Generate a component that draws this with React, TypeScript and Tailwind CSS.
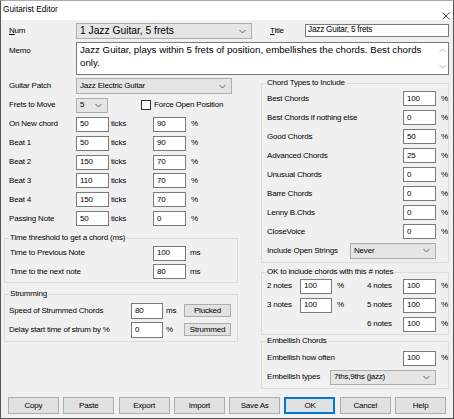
import React from 'react';

interface BoxProps {
   value?: string;
   className?: string;
}

const Chevron: React.FC<{ up?: boolean; color?: string }> = ({ up, color = '#555' }) => (
   <svg width="7" height="5" viewBox="0 0 7 5" className="shrink-0">
      <polyline
         points={up ? '0.5,4 3.5,1 6.5,4' : '0.5,1 3.5,4 6.5,1'}
         fill="none"
         stroke={color}
         strokeWidth="0.9"
      />
   </svg>
);

// поле ввода (edit box)
const Field: React.FC<BoxProps> = ({ value, className = 'w-[33px]' }) => (
   <div
      className={`h-[15px] shrink-0 bg-white border border-[#7a7a7a] flex items-center pl-[3px] text-[8px] tracking-[-0.2px] ${className}`}
   >
      {value}
   </div>
);

const Combo: React.FC<BoxProps & { big?: boolean }> = ({ value, className, big }) => (
   <div
      className={`shrink-0 bg-[#e5e5e5] border border-[#adadad] flex items-center justify-between pl-[3px] pr-[5px] ${
         big ? 'text-[10.25px]' : 'text-[8px] tracking-[-0.2px]'
      } ${className}`}
   >
      <span>{value}</span>
      <Chevron />
   </div>
);

const Label: React.FC<{ children: React.ReactNode; className?: string }> = ({ children, className }) => (
   <span className={`shrink-0 text-[8px] tracking-[-0.2px] whitespace-nowrap ${className ?? ''}`}>{children}</span>
);

const Group: React.FC<{ title: string; className?: string; children: React.ReactNode }> = ({
   title,
   className,
   children,
}) => (
   <div className={`relative border border-[#dcdcdc] ${className ?? ''}`}>
      <span className="absolute -top-[6px] left-[4px] bg-[#f0f0f0] px-[1px] leading-[10px] text-[8px] tracking-[-0.2px] whitespace-nowrap">
         {title}
      </span>
      {children}
   </div>
);

const Button: React.FC<{ children: React.ReactNode; className?: string; primary?: boolean }> = ({
   children,
   className = 'w-[51px] h-[17px]',
   primary,
}) => (
   <div
      className={`shrink-0 bg-[#e1e1e1] border flex items-center justify-center text-[8px] tracking-[-0.2px] ${
         primary ? 'border-[#0078d7] shadow-[inset_0_0_0_1px_#0078d7]' : 'border-[#adadad]'
      } ${className}`}
   >
      {children}
   </div>
);

const tickRows = [
   { label: 'On New chord', ticks: '50', pct: '90' },
   { label: 'Beat 1', ticks: '50', pct: '90' },
   { label: 'Beat 2', ticks: '150', pct: '70' },
   { label: 'Beat 3', ticks: '110', pct: '70' },
   { label: 'Beat 4', ticks: '150', pct: '70' },
   { label: 'Passing Note', ticks: '50', pct: '0' },
];

const chordTypes = [
   { label: 'Best Chords', value: '100' },
   { label: 'Best Chords if nothing else', value: '0' },
   { label: 'Good Chords', value: '50' },
   { label: 'Advanced Chords', value: '25' },
   { label: 'Unusual Chords', value: '0' },
   { label: 'Barre Chords', value: '0' },
   { label: 'Lenny B.Chds', value: '0' },
   { label: 'CloseVoice', value: '0' },
];

export default function App() {
   return (
      <div className="w-[454px] h-[419px] flex flex-col border border-[#555] border-t-[#aaa] bg-[#f0f0f0] text-black font-['Liberation_Sans',Arial,sans-serif] overflow-hidden">
         {/* заголовок окна */}
         <div className="h-[19px] shrink-0 bg-white flex items-start justify-between">
            <span className="pl-[2px] pt-[3px] leading-[10px] text-[8.3px]">Guitarist Editor</span>
            <svg width="8" height="8" viewBox="0 0 8 8" className="mt-[11px] mr-[3px]">
               <path d="M0.5 0.5 L7.5 7.5 M7.5 0.5 L0.5 7.5" stroke="#222" strokeWidth="0.8" />
            </svg>
         </div>

         <div className="flex-1 flex flex-col pl-[3px]">
            {/* Num / Title */}
            <div className="mt-[3px] h-[16px] flex items-center pl-[5px]">
               <Label className="w-[67px]">
                  <span className="underline">N</span>um
               </Label>
               <Combo value="1 Jazz Guitar, 5 frets" className="w-[176px] h-[16px]" big />
               <Label className="ml-[18px] w-[35px]">
                  <span className="underline">T</span>itle
               </Label>
               <div className="w-[144px] h-[13px] -mt-[2px] bg-white border border-[#7a7a7a] flex items-center pl-[2px] text-[8.2px] tracking-[-0.2px]">
                  Jazz Guitar, 5 frets
               </div>
            </div>

            {/* Memo */}
            <div className="mt-[3px] h-[33px] flex pl-[5px]">
               <Label className="w-[67px] pt-[3px]">Memo</Label>
               <div className="w-[373px] h-[33px] bg-white border border-[#7a7a7a] flex">
                  <div className="flex-1 pl-[3px] pt-[1px] text-[9.7px] leading-[12.5px] whitespace-nowrap overflow-hidden">
                     Jazz Guitar, plays within 5 frets of position, embellishes the chords. Best chords
                     <br />
                     only.
                  </div>
                  <div className="w-[12px] shrink-0 flex flex-col items-center justify-between py-[5px]">
                     <Chevron up color="#a6a6a6" />
                     <Chevron color="#a6a6a6" />
                  </div>
               </div>
            </div>

            <div className="flex">
               {/* левая колонка */}
               <div className="w-[234px] flex flex-col pt-[2px]">
                  <div className="h-[18.9px] flex items-center pl-[5px]">
                     <Label className="w-[67px]">Guitar Patch</Label>
                     <Combo value="Jazz Electric Guitar" className="w-[156px] h-[16px]" />
                  </div>
                  <div className="h-[18.9px] flex items-center pl-[5px]">
                     <Label className="w-[67px]">Frets to Move</Label>
                     <Combo value="5" className="w-[32px] h-[15px]" />
                     <div className="ml-[33px] w-[10px] h-[10px] bg-white border border-[#333]" />
                     <Label className="ml-[3px]">Force Open Position</Label>
                  </div>
                  {tickRows.map((r) => (
                     <div key={r.label} className="h-[18.9px] flex items-center pl-[5px]">
                        <Label className="w-[67px]">{r.label}</Label>
                        <Field value={r.ticks} className="w-[33px]" />
                        <Label className="ml-[2px] w-[42px]">ticks</Label>
                        <Field value={r.pct} className="w-[33px]" />
                        <Label className="ml-[5px]">%</Label>
                     </div>
                  ))}

                  <Group title="Time threshold to get a chord (ms)" className="mt-[10px] pt-[4.5px] pb-[1px]">
                     <div className="h-[18.9px] flex items-center pl-[5px]">
                        <Label className="w-[143px]">Time to Previous Note</Label>
                        <Field value="100" />
                        <Label className="ml-[4px]">ms</Label>
                     </div>
                     <div className="h-[18.9px] flex items-center pl-[5px]">
                        <Label className="w-[143px]">Time to the next note</Label>
                        <Field value="80" />
                        <Label className="ml-[4px]">ms</Label>
                     </div>
                  </Group>

                  <Group title="Strumming" className="mt-[10.5px] pt-[6.5px] pb-[1.5px]">
                     <div className="h-[19px] flex items-center pl-[4px]">
                        <Label className="w-[122px]">Speed of Strummed Chords</Label>
                        <Field value="80" className="w-[32px] h-[16px]" />
                        <Label className="ml-[3px] w-[18px]">ms</Label>
                        <Button className="w-[47px] h-[13px]">Plucked</Button>
                     </div>
                     <div className="h-[19px] flex items-center pl-[4px]">
                        <Label className="w-[122px]">Delay start time of strum by %</Label>
                        <Field value="0" className="w-[32px] h-[16px]" />
                        <Label className="ml-[3px] w-[18px]">%</Label>
                        <Button className="w-[47px] h-[13px]">Strummed</Button>
                     </div>
                  </Group>
               </div>

               {/* правая колонка */}
               <div className="ml-[23px] w-[188px] flex flex-col pt-[8px]">
                  <Group title="Chord Types to Include" className="pt-[5px] pb-[2px]">
                     {chordTypes.map((c) => (
                        <div key={c.label} className="h-[19px] flex items-center pl-[5px]">
                           <Label className="w-[136px]">{c.label}</Label>
                           <Field value={c.value} />
                           <Label className="ml-[5px]">%</Label>
                        </div>
                     ))}
                     <div className="h-[19px] flex items-center pl-[5px]">
                        <Label className="w-[83px]">Include Open Strings</Label>
                        <Combo value="Never" className="w-[86px] h-[16px]" />
                     </div>
                  </Group>

                  <Group title="OK to include chords with this # notes" className="mt-[9px] pt-[3.5px]">
                     <div className="h-[19px] flex items-center pl-[5px]">
                        <Label className="w-[33px]">2 notes</Label>
                        <Field value="100" className="w-[32px]" />
                        <Label className="ml-[5px] w-[30px]">%</Label>
                        <Label className="w-[36px]">4 notes</Label>
                        <Field value="100" />
                        <Label className="ml-[5px]">%</Label>
                     </div>
                     <div className="h-[19px] flex items-center pl-[5px]">
                        <Label className="w-[33px]">3 notes</Label>
                        <Field value="100" className="w-[32px]" />
                        <Label className="ml-[5px] w-[30px]">%</Label>
                        <Label className="w-[36px]">5 notes</Label>
                        <Field value="100" />
                        <Label className="ml-[5px]">%</Label>
                     </div>
                     <div className="h-[19px] flex items-center pl-[5px]">
                        <div className="w-[100px] shrink-0" />
                        <Label className="w-[36px]">6 notes</Label>
                        <Field value="100" />
                        <Label className="ml-[5px]">%</Label>
                     </div>
                  </Group>

                  <Group title="Embellish Chords" className="mt-[6.5px] pt-[6.5px] pb-[1px]">
                     <div className="h-[19px] flex items-center pl-[5px]">
                        <Label className="w-[136px]">Embellish how often</Label>
                        <Field value="100" />
                        <Label className="ml-[5px]">%</Label>
                     </div>
                     <div className="h-[19px] flex items-center pl-[5px]">
                        <Label className="w-[63px]">Embellish types</Label>
                        <Combo value="7ths,9ths (jazz)" className="w-[106px] h-[15px]" />
                     </div>
                  </Group>
               </div>
            </div>

            {/* кнопки */}
            <div className="mt-auto pb-[4px] pl-[4px] flex gap-[4.3px]">
               <Button>Copy</Button>
               <Button>Paste</Button>
               <Button>Export</Button>
               <Button>Import</Button>
               <Button>Save As</Button>
               <Button primary>OK</Button>
               <Button>Cancel</Button>
               <Button>Help</Button>
            </div>
         </div>
      </div>
   );
}
